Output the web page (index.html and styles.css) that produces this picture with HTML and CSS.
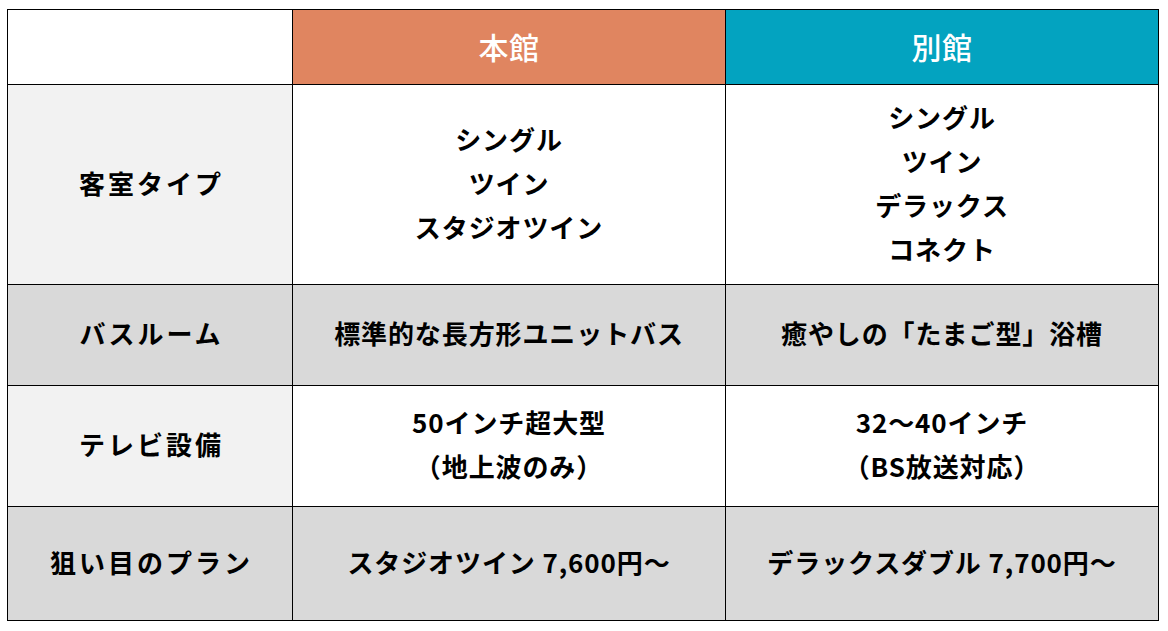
FILE: index.html
```html
<!DOCTYPE html>
<html lang="ja">
<head>
<meta charset="utf-8">
<title>本館・別館 比較</title>
<link rel="stylesheet" href="styles.css">
</head>
<body>
<div class="table">
  <div class="cell blank"></div>
  <div class="cell head main">本館</div>
  <div class="cell head annex">別館</div>

  <div class="cell label light">客室タイプ</div>
  <div class="cell"><div class="lines"><span>シングル</span><span>ツイン</span><span>スタジオツイン</span></div></div>
  <div class="cell"><div class="lines"><span>シングル</span><span>ツイン</span><span>デラックス</span><span>コネクト</span></div></div>

  <div class="cell label gray">バスルーム</div>
  <div class="cell gray">標準的な長方形ユニットバス</div>
  <div class="cell gray">癒やしの「たまご型」浴槽</div>

  <div class="cell label light">テレビ設備</div>
  <div class="cell"><div class="lines"><span>50インチ超大型</span><span>（地上波のみ）</span></div></div>
  <div class="cell"><div class="lines"><span>32～40インチ</span><span>（BS放送対応）</span></div></div>

  <div class="cell label gray">狙い目のプラン</div>
  <div class="cell gray">スタジオツイン 7,600円～</div>
  <div class="cell gray">デラックスダブル 7,700円～</div>
</div>
</body>
</html>
```

FILE: styles.css
```css
* { box-sizing: border-box; }
html, body { margin: 0; padding: 0; background: #fff; }
body {
  font-family: "Noto Sans CJK JP", "Noto Sans", sans-serif;
  color: #000;
}
.table {
  display: grid;
  grid-template-columns: 285px 433px 433px;
  grid-template-rows: 75px 200px 101px 121px 114px;
  margin: 9px 0 0 7px;
  width: 1152px;
  border-top: 1px solid #000;
  border-left: 1px solid #000;
}
.cell {
  border-right: 1px solid #000;
  border-bottom: 1px solid #000;
  display: flex;
  align-items: center;
  justify-content: center;
  text-align: center;
  font-size: 26px;
  font-weight: 700;
  line-height: 44px;
  letter-spacing: 0.9px;
  padding-bottom: 4px;
  background: #fff;
}
.lines { display: flex; flex-direction: column; align-items: center; }
.label {
  letter-spacing: 3px;
  padding-left: 3px;
}
.head {
  color: #fff;
  font-size: 30px;
  font-weight: 500;
  letter-spacing: 0.5px;
  padding-bottom: 2px;
}
.main { background: #e08560; }
.annex { background: #03a3c0; }
.light { background: #f2f2f2; }
.gray { background: #d9d9d9; }
```
